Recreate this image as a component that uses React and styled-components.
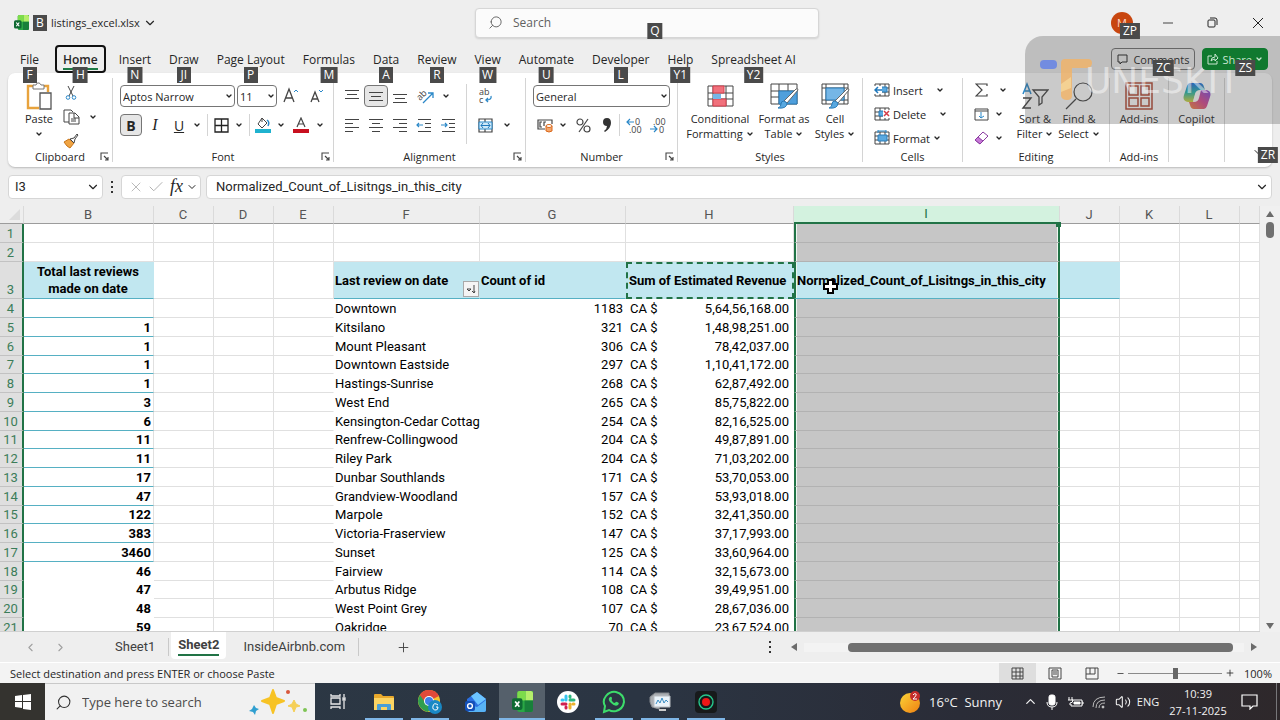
import styled, { createGlobalStyle, css } from "styled-components";
import {
  ChevronDown,
  ChevronLeft,
  ChevronRight,
  ChevronUp,
  Minus,
  Plus,
  Search as SearchIcon,
  X,
  Check,
  Volume2,
} from "lucide-react";

const GlobalStyle = createGlobalStyle`
  * { box-sizing: border-box; }
  body {
    margin: 0;
    background: #eeeeee;
    color: #262626;
    font-family: "Open Sans", "Noto Sans", sans-serif;
    font-size: 12px;
    overflow: hidden;
  }
  button, input, select { font: inherit; color: inherit; }
  button { background: none; border: none; padding: 0; }
`;

const Window = styled.div`
  position: relative;
  display: flex;
  flex-direction: column;
  height: 100vh;
`;

/* ---------- title bar ---------- */

const TitleBar = styled.header`
  display: grid;
  grid-template-columns: 1fr 344px 1fr;
  align-items: center;
  height: 45px;
  padding-left: 14px;
  flex: none;
`;

const FileArea = styled.div`
  display: flex;
  align-items: center;
  gap: 4px;
`;

const FileName = styled.button`
  display: flex;
  align-items: center;
  gap: 3px;
  font-size: 11px;
`;

const Tip = styled.kbd`
  display: inline-block;
  height: 16px;
  min-width: 14px;
  padding: 0 3px;
  background: #4a4a4a;
  color: #ffffff;
  font-family: "Open Sans", sans-serif;
  font-size: 12px;
  font-weight: 400;
  line-height: 16px;
  text-align: center;
`;

const FloatTip = styled(Tip)`
  position: absolute;
  z-index: 6;
  top: ${({ $top }) => $top}px;
  left: ${({ $left }) => $left || "50%"};
  transform: translateX(-50%);
`;

const Magnifier = styled(SearchIcon)`
  transform: scaleX(-1);
`;

const SearchBox = styled.label`
  position: relative;
  display: flex;
  align-items: center;
  gap: 10px;
  height: 30px;
  padding: 0 12px;
  background: #fbfbfb;
  border: 1px solid #d6d6d6;
  border-radius: 4px;
  box-shadow: 0 1px 2px #0000001f;
  color: #616161;

  input {
    flex: 1;
    min-width: 0;
    padding: 0;
    border: none;
    outline: none;
    background: none;
  }
  input::placeholder { color: #616161; opacity: 1; }
`;

const WindowButtons = styled.div`
  display: flex;
  justify-content: flex-end;
  align-items: center;
`;

const WindowButton = styled.button`
  display: grid;
  place-items: center;
  width: 45px;
  height: 32px;
`;

const Avatar = styled.button`
  position: relative;
  width: 22px;
  height: 22px;
  margin-right: 12px;
  border-radius: 50%;
  background: #c8460f;
  color: #ffd9c7;
  font-size: 11px;
`;

/* ---------- ribbon tabs ---------- */

const TabRow = styled.nav`
  display: flex;
  align-items: center;
  height: 28px;
  padding: 0 12px 0 11px;
  flex: none;
`;

const Tab = styled.button`
  position: relative;
  height: 28px;
  margin: 0 2px;
  padding: 0 7px;
  border-radius: 4px;
  white-space: nowrap;

  ${({ $active }) =>
    $active &&
    css`
      margin: 0 4px 0 7px;
      padding: 0 6px;
      border: 2px solid #111111;
      font-weight: 600;

      &::after {
        content: "";
        position: absolute;
        left: 6px;
        right: 6px;
        bottom: 1px;
        height: 2px;
        background: #1d7a45;
      }
    `}
`;

const Spacer = styled.div`
  flex: 1;
`;

const ActionButton = styled.button`
  position: relative;
  z-index: ${({ $primary }) => ($primary ? 5 : "auto")};
  display: flex;
  align-items: center;
  gap: ${({ $primary }) => ($primary ? 3 : 5)}px;
  height: 22px;
  padding: 0 ${({ $primary }) => ($primary ? 4 : 5)}px;
  margin-left: 7px;
  border: 1px solid ${({ $primary }) => ($primary ? "#10792f" : "#707070")};
  border-radius: 4px;
  background: ${({ $primary }) => ($primary ? "#10792f" : "transparent")};
  color: ${({ $primary }) => ($primary ? "#c9e6d1" : "#1c1c1c")};
  font-size: 11px;
`;

/* ---------- ribbon ---------- */

const Ribbon = styled.section`
  position: relative;
  display: flex;
  height: 94px;
  margin: 0 8px;
  padding: 5px 0;
  background: #ffffff;
  border-radius: 7px;
  box-shadow: 0 1px 2px #00000038;
  flex: none;
`;

const Group = styled.div`
  position: relative;
  display: flex;
  flex-direction: column;
  width: ${({ $w }) => $w}px;
  border-right: 1px solid #d4d4d4;
`;

const GroupBody = styled.div`
  display: flex;
  flex: 1;
  min-height: 0;
  padding: ${({ $pad }) => $pad || "0"};
`;

const GroupLabel = styled.div`
  display: flex;
  justify-content: center;
  height: 16px;
  font-size: 11px;
  line-height: 21px;
  flex: none;
`;

const Launcher = styled.button`
  position: absolute;
  right: 3px;
  bottom: 0;
  width: 10px;
  height: 12px;
  display: grid;
  place-items: center;
`;

const Rows = styled.div`
  display: flex;
  flex-direction: column;
  gap: ${({ $gap }) => $gap || 0}px;
`;

const Row = styled.div`
  display: flex;
  align-items: center;
  height: 24px;
  flex: none;
`;

const Tool = styled.button`
  display: flex;
  align-items: center;
  justify-content: center;
  width: ${({ $w }) => $w || 24}px;
  height: 22px;
  border-radius: 4px;
  font-size: 14px;
  ${({ $on }) => $on && "background: #e6e6e6; border: 1px solid #757575;"}

  i { font-family: "Liberation Serif", serif; font-size: 16px; }
`;

const MiniChevron = styled.button`
  display: grid;
  place-items: center;
  width: ${({ $w }) => $w || 12}px;
  height: 20px;
`;

const Rule = styled.span`
  width: 1px;
  height: ${({ $h }) => $h || 22}px;
  margin: 0 ${({ $m }) => $m || 0}px;
  background: #d4d4d4;
`;

const SelectWrap = styled.label`
  position: relative;
  width: ${({ $w }) => $w}px;
  height: 22px;
  margin-right: 2px;

  select {
    width: 100%;
    height: 100%;
    padding: 0 2px;
    appearance: none;
    border: 1px solid #757575;
    border-radius: 4px;
    background: #ffffff;
    font-size: 11px;
  }
  svg {
    position: absolute;
    right: 2px;
    top: 7px;
    pointer-events: none;
  }
`;

const BigButton = styled.button`
  display: flex;
  flex-direction: column;
  align-items: center;
  width: ${({ $w }) => $w}px;
  font-size: 11px;
  line-height: 15px;
  white-space: nowrap;

  span { display: flex; align-items: center; gap: 3px; }
`;

const BigIcon = styled.div`
  display: grid;
  place-items: center;
  height: 30px;
  flex: none;
`;

const BigChevron = styled.div`
  display: grid;
  place-items: center;
  height: 15px;
`;

const TextTool = styled.button`
  display: flex;
  align-items: center;
  gap: 3px;
  height: 24px;
  font-size: 11px;
  flex: none;
`;

const Collapse = styled.button`
  position: absolute;
  right: 8px;
  bottom: 5px;
`;

/* ---------- recorder mark over the corner ---------- */

const Mark = styled.div`
  position: absolute;
  z-index: 4;
  top: 36px;
  right: 0;
  display: flex;
  width: 255px;
  height: 88px;
  padding: 22px 0 0 14px;
  border-top-left-radius: 18px;
  background: #5050504d;
  pointer-events: none;
`;

const MarkText = styled.span`
  margin: 5px 0 0 4px;
  color: #ffffff78;
  font-family: "DejaVu Sans", sans-serif;
  font-size: 36px;
  line-height: 36px;
`;

const MarkLogo = styled.svg`
  width: 42px;
  height: 46px;
  overflow: visible;
`;

/* ---------- formula bar ---------- */

const FormulaBar = styled.section`
  display: flex;
  align-items: center;
  gap: 5px;
  height: 39px;
  padding: 0 8px;
  flex: none;
`;

const Field = styled.div`
  display: flex;
  align-items: center;
  justify-content: space-between;
  width: ${({ $w }) => ($w ? `${$w}px` : "auto")};
  flex: ${({ $w }) => ($w ? "none" : 1)};
  height: 24px;
  padding: 0 2px 0 6px;
  border: 1px solid #d6d6d6;
  border-radius: 4px;
  background: #ffffff;

  input {
    flex: 1;
    width: 10px;
    border: none;
    outline: none;
    background: none;
    font-family: Roboto, sans-serif;
    font-size: 13px;
  }
`;

const NameInput = styled.input`
  padding: 0;
`;

const FormulaInput = styled.input`
  padding: 0 0 0 3px;
`;

const Fx = styled.button`
  margin-left: 2px;
  font-family: "Liberation Serif", serif;
  font-style: italic;
  font-size: 18px;
`;

const Dots = styled.button`
  display: grid;
  place-items: center;
  width: 8px;
  height: 20px;
`;

/* ---------- sheet ---------- */

const SheetArea = styled.main`
  display: flex;
  flex: 1;
  min-height: 0;
`;

const SheetClip = styled.div`
  flex: 1;
  min-width: 0;
  overflow: hidden;
  border-bottom: 1px solid #d0d0d0;
`;

const Sheet = styled.table`
  width: 100%;
  table-layout: fixed;
  border-collapse: separate;
  border-spacing: 0;
  background: #ffffff;
  font-family: Roboto, "Open Sans", sans-serif;
  font-size: 13px;
  color: #000000;

  td, th {
    position: relative;
    padding: 0 2px 0 1px;
    line-height: 17px;
    white-space: nowrap;
  }
  thead th { line-height: 16px; }
`;

const SheetRow = styled.tr`
  height: ${({ $h }) => $h}px;
`;

const ColumnHead = styled.th`
  background: ${({ $on }) => ($on ? "#d3f2df" : "#eeeeee")};
  border-right: 1px solid #dadada;
  border-bottom: ${({ $on }) => ($on ? "2px solid #217346" : "1px solid #9c9c9c")};
  color: ${({ $on }) => ($on ? "#217346" : "#555555")};
  font-weight: 400;
`;

const FillHandle = styled.i`
  position: absolute;
  z-index: 2;
  right: -2px;
  bottom: -5px;
  width: 5px;
  height: 5px;
  background: #217346;
`;

const Corner = styled.i`
  display: block;
  width: 0;
  margin: 0 0 0 8px;
  border-left: 11px solid transparent;
  border-bottom: 11px solid #dcdcdc;
`;

const RowHead = styled.th`
  background: #dfdfdf;
  border-right: 2px solid #217346;
  border-bottom: 1px solid #c2c2c2;
  color: #3b7d59;
  font-weight: 400;
  vertical-align: bottom;
`;

const Cell = styled.td`
  border-right: 1px solid #e0e0e0;
  border-bottom: 1px solid #e0e0e0;
  font-weight: ${({ $bold }) => ($bold ? 700 : 400)};
  text-align: ${({ $align }) => $align || "left"};

  ${({ $plain }) => $plain && "border-color: transparent;"}
  ${({ $noRight }) => $noRight && "border-right-color: transparent;"}
  ${({ $picked }) =>
    $picked &&
    css`
      background: #c6c6c6;
      border-left: 2px solid #217346;
      border-right: 2px solid #217346;
      border-bottom-color: #b2b2b2;
      box-shadow: inset 1px 0 #eef6f0, inset -1px 0 #eef6f0;
    `}
  ${({ $head }) => $head && "background: #c1e7f0;"}
  ${({ $head, $picked }) => $head && !$picked && "border-right-color: #c1e7f0;"}
  ${({ $teal }) => $teal && "border-bottom-color: #56b0c3;"}
  ${({ $copied }) => $copied && "border: 2px dashed #217346;"}
`;

const Money = styled.div`
  display: flex;
  justify-content: space-between;
  padding: 0 2px 0 3px;
`;

const FilterButton = styled.button`
  position: absolute;
  right: 0;
  bottom: 1px;
  display: grid;
  place-items: center;
  width: 16px;
  height: 16px;
  background: #f4f4f4;
  border: 1px solid #a9a9a9;
`;

const Pointer = styled.svg`
  position: absolute;
  left: 27px;
  top: 17px;
`;

const VScroll = styled.div`
  display: flex;
  flex-direction: column;
  align-items: center;
  width: 20px;
  padding: 4px 0 2px;
  background: #f0f0f0;
`;

const VThumb = styled.div`
  width: 8px;
  height: 16px;
  margin: 4px 0 auto;
  border-radius: 4px;
  background: #707070;
`;

/* ---------- sheet tabs + status ---------- */

const SheetTabs = styled.nav`
  display: flex;
  align-items: center;
  height: 31px;
  padding: 0 22px 0 15px;
  border-bottom: 1px solid #ffffff;
  flex: none;
`;

const SheetArrows = styled.div`
  display: flex;
  margin-right: 26px;
`;

const Arrow = styled.button`
  display: grid;
  place-items: center;
  width: 30px;
  height: 24px;
  color: #a0a0a0;
`;

const AddSheet = styled(Arrow)`
  margin-left: 29px;
  color: #444444;
`;

const SheetTab = styled.button`
  height: 18px;
  padding: 0 13px 0 14px;
  font-family: Roboto, sans-serif;
  font-size: 13px;
  line-height: 18px;
  color: #404040;
  border-right: 1px solid #c9c9c9;

  ${({ $active }) =>
    $active &&
    css`
      align-self: flex-start;
      height: 27px;
      margin: 0 3px 0 2px;
      padding: 0 7px;
      background: #ffffff;
      border: none;
      border-radius: 0 0 4px 4px;
      font-weight: 700;

      span {
        display: block;
        border-bottom: 2px solid #217346;
      }
    `}
`;

const HScroll = styled.div`
  display: flex;
  align-items: center;
  gap: 6px;
  width: 468px;
  margin-left: 16px;
`;

const HTrack = styled.div`
  flex: 1;
  height: 9px;
  padding: 0 11px 0 44px;
  background: #f3f3f3;
`;

const HThumb = styled.div`
  height: 9px;
  border-radius: 4px;
  background: #707070;
`;

const Status = styled.footer`
  display: flex;
  align-items: center;
  height: 20px;
  padding: 0 8px 0 10px;
  background: #f3f3f3;
  font-size: 11px;
  flex: none;
`;

const ViewButton = styled.button`
  display: grid;
  place-items: center;
  width: 37px;
  height: 20px;
  background: ${({ $on }) => ($on ? "#dedede" : "none")};
`;

const Zoom = styled.div`
  display: flex;
  align-items: center;
  gap: 3px;
  margin-left: 6px;

  input {
    width: 94px;
    height: 14px;
    margin: 0;
    appearance: none;
    background: linear-gradient(#8a8a8a, #8a8a8a) center / 100% 1px no-repeat;
  }
  input::-webkit-slider-thumb {
    appearance: none;
    width: 5px;
    height: 11px;
    background: #666666;
  }
  output { width: 34px; text-align: right; }
`;

/* ---------- taskbar ---------- */

const Taskbar = styled.footer`
  display: flex;
  height: 37px;
  background: linear-gradient(90deg, #2c3944, #2b3543 50%, #2a2c37 75%, #2e282b);
  color: #f2f2f2;
  flex: none;
`;

const Start = styled.button`
  display: grid;
  place-items: center;
  width: 45px;
  background: #34332f;
`;

const TaskSearch = styled.label`
  display: flex;
  align-items: center;
  gap: 10px;
  width: 270px;
  padding: 0 6px 0 10px;
  background: #f1f1f1;
  border-top: 1px solid #c9c9c9;
  color: #333333;

  input {
    flex: 1;
    min-width: 0;
    padding: 0;
    border: none;
    outline: none;
    background: none;
    font-size: 13px;
  }
  input::placeholder { color: #4b4b4b; opacity: 1; }
`;

const TaskButton = styled.button`
  position: relative;
  display: grid;
  place-items: center;
  width: 46px;
  background: ${({ $on }) => ($on ? "#55606b" : "none")};

  &::after {
    content: "";
    position: absolute;
    bottom: 0;
    left: ${({ $on }) => ($on ? 0 : 4)}px;
    right: ${({ $on }) => ($on ? 0 : 4)}px;
    height: 2px;
    background: ${({ $open }) => ($open ? "#7fb6e6" : "none")};
  }
`;

const Weather = styled.button`
  display: flex;
  align-items: center;
  gap: 8px;
  margin-right: 17px;
  font-size: 13px;
  white-space: pre;
`;

const Tray = styled.button`
  display: grid;
  place-items: center;
  width: ${({ $w }) => $w || 23}px;
  font-size: 11px;
`;

const Clock = styled.time`
  display: flex;
  flex-direction: column;
  align-items: center;
  justify-content: center;
  width: 76px;
  font-size: 11px;
  line-height: 17px;
`;

const Bell = styled(Tray)`
  padding-right: 14px;
  border-right: 1px solid #77777a;
  margin-right: 3px;
`;

/* ---------- drawings ---------- */

const Svg = ({ w = 16, h = w, box, children, ...rest }) => (
  <svg width={w} height={h} viewBox={box || `0 0 ${w} ${h}`} fill="none" stroke="#444" aria-hidden="true" {...rest}>
    {children}
  </svg>
);

const Chev = ({ size = 8 }) => <ChevronDown size={size} strokeWidth={size > 9 ? 2 : 4} aria-hidden="true" />;

const Glyph = styled.text`
  fill: #444444;
  stroke: none;
  font-family: "Open Sans", sans-serif;
  font-size: 9px;
`;

const ExcelIcon = ({ size = 16 }) => (
  <Svg w={size} box="0 0 20 20" stroke="none">
    <path d="M5 2q0-2 2-2h13v18q0 2-2 2H7q-2 0-2-2z" fill="#2aa745" />
    <path d="M5 2q0-2 2-2h6v9H5z" fill="#7ddc4b" />
    <path d="M13 0h5q2 0 2 2v7h-7z" fill="#b5ee6b" />
    <path d="M12 9h8v9q0 2-2 2h-6z" fill="#18803a" />
    <rect y="7" width="10" height="11" rx="2" fill="#0f6a33" />
    <path d="m3 10 4 5m0-5-4 5" stroke="#fff" strokeWidth="1.6" />
  </Svg>
);

const PasteIcon = () => (
  <Svg w={28} h={29}>
    <path d="M9 4H3v22h11M19 4h4v6" stroke="#e8a33d" strokeWidth="2.4" />
    <path d="M8 7V3h3q1-3 3-2 1 0 2 2h3v4z" fill="#fff" stroke="#777" />
    <path d="M15 11h11v16H15z" fill="#fff" stroke="#555" strokeWidth="1.3" />
  </Svg>
);

const CutIcon = () => (
  <Svg w={14}>
    <path d="M4 0 9 10M10 0 5 10" />
    <circle cx="4" cy="11.500" r="1.800" stroke="#2b88c8" />
    <circle cx="10" cy="11.500" r="1.800" stroke="#2b88c8" />
  </Svg>
);

const CopyIcon = () => (
  <Svg w={17}>
    <path d="M6 13H1V1h7l2 2M6 4h6l4 4v7H6zM11 4v5h5M8 10h5M8 12h5" />
  </Svg>
);

const BrushIcon = () => (
  <Svg w={16}>
    <path d="m1 9 5-3 5 4-4 5q-3-1-6-6z" fill="#f0a443" stroke="#c7751b" />
    <path d="m7 6 4-1 3-4 1 1-3 4-1 4z" fill="#fff" />
  </Svg>
);

const GrowIcon = ({ small }) => (
  <Svg w={18}>
    <path d={small ? "M2 15 6 5l4 10M3 12h6" : "M1 15 6 2l5 13M3 11h6"} strokeWidth="1.3" />
    <path d={small ? "m10 3 2 2 2-2" : "m11 5 2-2 2 2"} stroke="#2b88c8" />
  </Svg>
);

const BordersIcon = () => (
  <Svg w={15} stroke="#222">
    <path d="M1 1h13v13H1zM7.500 1v13M1 7.500h13" strokeWidth="1.3" />
  </Svg>
);

const FillIcon = () => (
  <Svg w={16}>
    <path d="m7 1 5 5-5 5-4-4zM7 1v4" />
    <path d="M12 3q3 2 1 6" stroke="#2b88c8" strokeWidth="1.500" />
    <path d="M0 14h16" stroke="#1fb2cf" strokeWidth="4" />
  </Svg>
);

const FontColorIcon = () => (
  <Svg w={16}>
    <path d="m4 10 4-9 4 9M5 7h6" strokeWidth="1.2" />
    <path d="M0 14h16" stroke="#c8101f" strokeWidth="4" />
  </Svg>
);

const LINES = {
  top: "M1 2.500h14M3 6.500h10M1 10.500h14",
  middle: "M1 4.500h14M3 8.500h10M1 12.500h14",
  bottom: "M1 6.500h14M3 10.500h10M1 14.500h14",
  left: "M1 2.500h14M1 6.500h8M1 10.500h14M1 14.500h8",
  center: "M1 2.500h14M4 6.500h8M1 10.500h14M4 14.500h8",
  right: "M1 2.500h14M7 6.500h8M1 10.500h14M7 14.500h8",
};

const LinesIcon = ({ kind }) => (
  <Svg w={16}>
    <path d={LINES[kind]} strokeWidth="1.2" />
  </Svg>
);

const IndentIcon = ({ out }) => (
  <Svg w={16}>
    <path d="M2 2.500h13M9 6.500h6M9 10.500h6M2 14.500h13" strokeWidth="1.2" />
    <path d={out ? "M7 8H1m2-2L1 8l2 2" : "M1 8h6M5 6l2 2-2 2"} stroke="#2b88c8" strokeWidth="1.2" />
  </Svg>
);

const OrientIcon = () => (
  <Svg w={18}>
    <Glyph x="0" y="11" transform="rotate(-45 5 9)">ab</Glyph>
    <path d="m6 16 10-10m-5 0h5v5" stroke="#2b88c8" strokeWidth="1.3" />
  </Svg>
);

const WrapIcon = () => (
  <Svg w={15} h={18}>
    <Glyph x="1" y="8">ab</Glyph>
    <Glyph x="1" y="16">c</Glyph>
    <path d="M13 9q1 4-5 4m2-2-2 2 2 2" stroke="#2b88c8" strokeWidth="1.3" />
  </Svg>
);

const MergeIcon = () => (
  <Svg w={15}>
    <path d="M1 1h13v13H1zM7 1v3M7 11v3" strokeWidth="1.2" />
    <path d="M1 4h13v7H1z" fill="#cfe9f8" stroke="#2b88c8" />
    <path d="M3 7.500h9M5 5 3 7.500l2 2.500m5-5 2 2.500-2 2.500" stroke="#1f78bc" />
  </Svg>
);

const CurrencyIcon = () => (
  <Svg w={17}>
    <path d="M8 12H1V3h14v4M5 5H3v5h2M9 5H7v4" strokeWidth="1.2" />
    <path d="M9 9v5q3 2 6 0V9" fill="#f5a66b" stroke="#d9671a" />
    <ellipse cx="12" cy="9" rx="3" ry="1.500" fill="#fff" stroke="#d9671a" />
  </Svg>
);

const DecimalIcon = ({ more }) => (
  <Svg w={18} h={17}>
    <Glyph x={more ? 10 : 4} y="8">{more ? "0" : ".00"}</Glyph>
    <Glyph x={more ? 4 : 10} y="16">{more ? ".00" : "0"}</Glyph>
    <path d={more ? "M9 5H2m3-3L2 5l3 3" : "M1 12h7M5 9l3 3-3 3"} stroke="#2b88c8" strokeWidth="1.2" />
  </Svg>
);

const CondIcon = () => (
  <Svg w={27} h={23}>
    <path d="M1 1h25v20H1zM1 8h25M1 14h25M6 1v20M19 1v20" />
    <path d="M6 1h11v7H6zM6 14h13v7H6z" fill="#f0717c" stroke="#d8404f" />
    <path d="M6 9h8v5H6z" fill="#75b6e6" stroke="none" />
  </Svg>
);

const TableStyleIcon = ({ cell }) => (
  <Svg w={29} h={27}>
    <path d={cell ? "M1 1h26v20H1zM1 5h26M5 1v20M23 1v20M1 17h26" : "M1 1h26v20H1zM1 8h26M1 14h26M9 1v20M18 1v20"} />
    {cell ? (
      <path d="M5 5h18v12H5z" fill="#75b6e6" stroke="#2b7cb8" />
    ) : (
      <path d="M9 8h18v13H9z" fill="#4f9fdc" stroke="#2b7cb8" />
    )}
    <path d="M28 7 17 20l-3-2L26 6q2-1 2 1z" fill="#fff" stroke="#666" />
    <path d="M17 20q0 6-9 5 3-1 3-4t3-3z" fill="#58a8e0" stroke="#2b7cb8" />
  </Svg>
);

const CellsIcon = ({ kind }) => (
  <Svg w={16}>
    <path d="M1 2h14v12H1zM1 6h14M1 10h14M6 2v12M11 2v12" />
    <path d={kind === "format" ? "M4 5h9v6H4z" : "M5 5h8v5H5z"} fill="#5aa9e0" stroke="#2b7cb8" />
    {kind === "insert" && (
      <>
        <path d="M0 4h8v8H0z" fill="#fff" stroke="none" />
        <path d="M8 8H1m3-3L1 8l3 3" stroke="#1f78bc" strokeWidth="1.500" />
      </>
    )}
    {kind === "delete" && (
      <>
        <path d="M9 4h7v8H9z" fill="#fff" stroke="none" />
        <path d="m10 5 5 5m0-5-5 5" stroke="#d33c48" strokeWidth="1.500" />
      </>
    )}
    {kind === "format" && <path d="M4 0v3M12 0v3M4 1h8" stroke="#2b88c8" />}
  </Svg>
);

const SortIcon = () => (
  <Svg w={28}>
    <path d="m2 12 4-10 4 10M3 9h6" stroke="#2b88c8" strokeWidth="1.500" />
    <path d="M2 16h8L2 26h8" strokeWidth="1.400" />
    <path d="M12 8h15l-6 7v6l-3 2v-8z" strokeWidth="1.300" />
  </Svg>
);

const FindIcon = () => (
  <Svg w={28}>
    <circle cx="18" cy="10" r="9" strokeWidth="1.200" />
    <path d="M11 17 1 27" strokeWidth="1.200" />
  </Svg>
);

const AddinsIcon = () => (
  <Svg w={28} stroke="#b64a35">
    <path d="M1 1h26v26H1z" strokeWidth="1.500" />
    <path d="M4 4h9v9H4zM16 4h8v9h-8zM4 16h9v8H4zM16 16h8v8h-8z" strokeWidth="1.500" />
  </Svg>
);

const CopilotIcon = () => (
  <Svg w={28} stroke="none">
    <defs>
      <linearGradient id="cpA" x1="0" y1="0" x2="0" y2="1">
        <stop offset="0" stopColor="#1d6fe0" />
        <stop offset=".5" stopColor="#2bb8a8" />
        <stop offset="1" stopColor="#d7d43b" />
      </linearGradient>
      <linearGradient id="cpB" x1="1" y1="0" x2="0" y2="1">
        <stop offset="0" stopColor="#7a4be0" />
        <stop offset=".5" stopColor="#d8488f" />
        <stop offset="1" stopColor="#f58a3a" />
      </linearGradient>
    </defs>
    <path d="M7 1h10q3 0 4 4l1 3h-5q-4 0-5 4l-2 8H5q-6-1-4-7L4 4q1-3 3-3z" fill="url(#cpA)" />
    <path d="M21 27H11q-3 0-4-4l-1-3h5q4 0 5-4l2-8h5q6 1 4 7l-3 9q-1 3-3 3z" fill="url(#cpB)" />
    <path d="M13 10h4l-3 9h-4z" fill="#fff" opacity=".8" />
  </Svg>
);

const LaunchIcon = () => (
  <Svg w={9}>
    <path d="M1 8V1h7M4 4l4 4M8 5v3H5" strokeWidth="1.1" />
  </Svg>
);

const DotsIcon = () => (
  <Svg w={4} h={12} stroke="none">
    <path d="M1 0h2v2H1zM1 5h2v2H1zM1 10h2v2H1z" fill="#333" />
  </Svg>
);

const Triangle = ({ d }) => (
  <Svg w={8} stroke="none">
    <path d={d} fill="#6b6b6b" />
  </Svg>
);

/* ---------- data ---------- */

const tabs = [
  ["File", "F"],
  ["Home", "H"],
  ["Insert", "N"],
  ["Draw", "JI"],
  ["Page Layout", "P"],
  ["Formulas", "M"],
  ["Data", "A"],
  ["Review", "R"],
  ["View", "W"],
  ["Automate", "U"],
  ["Developer", "L"],
  ["Help", "Y1"],
  ["Spreadsheet AI", "Y2"],
];

const columns = [
  ["B", 130],
  ["C", 60],
  ["D", 60],
  ["E", 60],
  ["F", 146],
  ["G", 146],
  ["H", 168],
  ["I", 266],
  ["J", 60],
  ["K", 60],
  ["L", 60],
];

const rows = [
  ["", "Downtown", 1183, "5,64,56,168.00"],
  [1, "Kitsilano", 321, "1,48,98,251.00"],
  [1, "Mount Pleasant", 306, "78,42,037.00"],
  [1, "Downtown Eastside", 297, "1,10,41,172.00"],
  [1, "Hastings-Sunrise", 268, "62,87,492.00"],
  [3, "West End", 265, "85,75,822.00"],
  [6, "Kensington-Cedar Cottag", 254, "82,16,525.00"],
  [11, "Renfrew-Collingwood", 204, "49,87,891.00"],
  [11, "Riley Park", 204, "71,03,202.00"],
  [17, "Dunbar Southlands", 171, "53,70,053.00"],
  [47, "Grandview-Woodland", 157, "53,93,018.00"],
  [122, "Marpole", 152, "32,41,350.00"],
  [383, "Victoria-Fraserview", 147, "37,17,993.00"],
  [3460, "Sunset", 125, "33,60,964.00"],
  [46, "Fairview", 114, "32,15,673.00"],
  [47, "Arbutus Ridge", 108, "39,49,951.00"],
  [48, "West Point Grey", 107, "28,67,036.00"],
  [59, "Oakridge", 70, "23,67,524.00"],
];

const blanks = (keys, noRightOn) => keys.map((k) => <Cell key={k} $noRight={k === noRightOn} />);

function EmptyRow({ n }) {
  return (
    <SheetRow $h={19}>
      <RowHead scope="row">{n}</RowHead>
      {columns.map(([c]) => (
        <Cell key={c} $picked={c === "I"} />
      ))}
      <Cell />
    </SheetRow>
  );
}

function Grid() {
  return (
    <Sheet>
      <colgroup>
        <col width="24" />
        {columns.map(([c, w]) => (
          <col key={c} width={w} />
        ))}
        <col />
      </colgroup>
      <thead>
        <SheetRow $h={18}>
          <ColumnHead>
            <Corner />
          </ColumnHead>
          {columns.map(([c]) => (
            <ColumnHead key={c} scope="col" $on={c === "I"}>
              {c}
              {c === "I" && <FillHandle />}
            </ColumnHead>
          ))}
          <ColumnHead />
        </SheetRow>
      </thead>
      <tbody>
        <EmptyRow n={1} />
        <EmptyRow n={2} />
        <SheetRow $h={37}>
          <RowHead scope="row">3</RowHead>
          <Cell $head $teal $bold $align="center">
            Total last reviews
            <br />
            made on date
          </Cell>
          {blanks(["C", "D", "E"])}
          <Cell $head $teal $bold>
            Last review on date
            <FilterButton aria-label="Sort and filter">
              <Svg w={10}>
                <path d="M1 5h4L3 7zM8 1v8M6 7l2 2 1-2" />
              </Svg>
            </FilterButton>
          </Cell>
          <Cell $head $teal $bold>Count of id</Cell>
          <Cell $head $bold $copied>Sum of Estimated Revenue</Cell>
          <Cell $head $teal $bold $picked>
            Normalized_Count_of_Lisitngs_in_this_city
            <Pointer width="15" height="15" viewBox="0 0 15 15" aria-hidden="true">
              <path d="M5 1h5v4h4v5h-4v4H5v-4H1V5h4z" fill="#fff" stroke="#000" strokeWidth="2" />
            </Pointer>
          </Cell>
          <Cell $head $teal />
          {blanks(["K", "L", "M"])}
        </SheetRow>
        {rows.map(([reviews, area, count, revenue], i) => (
          <SheetRow key={area} $h={i % 4 === 3 ? 18 : 19}>
            <RowHead scope="row">{i + 4}</RowHead>
            <Cell $bold $align="right" $teal={i < 14} $plain={i >= 14}>
              {reviews}
            </Cell>
            {blanks(["C", "D", "E"], "E")}
            <Cell $plain>{area}</Cell>
            <Cell $plain $align="right">{count}</Cell>
            <Cell $plain>
              <Money>
                <span>CA $</span>
                <span>{revenue}</span>
              </Money>
            </Cell>
            <Cell $picked />
            {blanks(["J", "K", "L", "M"])}
          </SheetRow>
        ))}
      </tbody>
    </Sheet>
  );
}

function RibbonGroup({ label, width, pad, launch, children }) {
  return (
    <Group $w={width}>
      <GroupBody $pad={pad}>{children}</GroupBody>
      <GroupLabel>{label}</GroupLabel>
      {launch && (
        <Launcher aria-label={`${label} settings`}>
          <LaunchIcon />
        </Launcher>
      )}
    </Group>
  );
}

function Big({ width, icon, lines, menu }) {
  return (
    <BigButton $w={width}>
      <BigIcon>{icon}</BigIcon>
      {lines.map((line, i) => (
        <span key={line}>
          {line}
          {menu && i === lines.length - 1 && <Chev />}
        </span>
      ))}
    </BigButton>
  );
}

function RibbonBar() {
  return (
    <Ribbon>
      <RibbonGroup label="Clipboard" width={105} pad="3px 0 0 14px" launch>
        <BigButton $w={34}>
          <BigIcon><PasteIcon /></BigIcon>
          <span>Paste</span>
          <BigChevron><Chev /></BigChevron>
        </BigButton>
        <Rows>
          <Row><Tool $w={30} aria-label="Cut"><CutIcon /></Tool></Row>
          <Row>
            <Tool $w={30} aria-label="Copy"><CopyIcon /></Tool>
            <MiniChevron $w={14}><Chev /></MiniChevron>
          </Row>
          <Row><Tool $w={30} aria-label="Format Painter"><BrushIcon /></Tool></Row>
        </Rows>
      </RibbonGroup>

      <RibbonGroup label="Font" width={221} pad="6px 0 0 7px" launch>
        <Rows $gap={5}>
          <Row>
            <SelectWrap $w={115}>
              <select aria-label="Font"><option>Aptos Narrow</option></select>
              <Chev />
            </SelectWrap>
            <SelectWrap $w={40}>
              <select aria-label="Font size"><option>11</option></select>
              <Chev />
            </SelectWrap>
            <Tool $w={26} aria-label="Grow font"><GrowIcon /></Tool>
            <Tool $w={26} aria-label="Shrink font"><GrowIcon small /></Tool>
          </Row>
          <Row>
            <Tool $w={22} $on><b>B</b></Tool>
            <Tool $w={26}><i>I</i></Tool>
            <Tool $w={22}><u>U</u></Tool>
            <MiniChevron $w={14}><Chev /></MiniChevron>
            <Rule $m={3} />
            <Tool $w={20} aria-label="Borders"><BordersIcon /></Tool>
            <MiniChevron $w={16}><Chev /></MiniChevron>
            <Rule $m={2} />
            <Tool $w={22} aria-label="Fill color"><FillIcon /></Tool>
            <MiniChevron $w={14}><Chev /></MiniChevron>
            <Tool $w={26} aria-label="Font color"><FontColorIcon /></Tool>
            <MiniChevron><Chev /></MiniChevron>
          </Row>
        </Rows>
      </RibbonGroup>

      <RibbonGroup label="Alignment" width={192} pad="6px 0 0 6px" launch>
        <Rows $gap={5}>
          <Row>
            <Tool aria-label="Top align"><LinesIcon kind="top" /></Tool>
            <Tool $on aria-label="Middle align"><LinesIcon kind="middle" /></Tool>
            <Tool aria-label="Bottom align"><LinesIcon kind="bottom" /></Tool>
            <Tool $w={28} aria-label="Orientation"><OrientIcon /></Tool>
            <MiniChevron><Chev /></MiniChevron>
          </Row>
          <Row>
            <Tool aria-label="Align left"><LinesIcon kind="left" /></Tool>
            <Tool aria-label="Center"><LinesIcon kind="center" /></Tool>
            <Tool aria-label="Align right"><LinesIcon kind="right" /></Tool>
            <Tool aria-label="Decrease indent"><IndentIcon out /></Tool>
            <Tool aria-label="Increase indent"><IndentIcon /></Tool>
          </Row>
        </Rows>
        <Rule $h={60} $m={6} />
        <Rows $gap={5}>
          <Row><Tool aria-label="Wrap text"><WrapIcon /></Tool></Row>
          <Row>
            <Tool aria-label="Merge"><MergeIcon /></Tool>
            <MiniChevron $w={20}><Chev /></MiniChevron>
          </Row>
        </Rows>
      </RibbonGroup>

      <RibbonGroup label="Number" width={152} pad="6px 0 0 7px" launch>
        <Rows $gap={5}>
          <Row>
            <SelectWrap $w={137}>
              <select aria-label="Number format"><option>General</option></select>
              <Chev />
            </SelectWrap>
          </Row>
          <Row>
            <Tool aria-label="Accounting format"><CurrencyIcon /></Tool>
            <MiniChevron><Chev /></MiniChevron>
            <Tool $w={28} aria-label="Percent style">
              <Svg w={15}>
                <circle cx="4" cy="4" r="3" strokeWidth="1.200" />
                <circle cx="11" cy="11" r="3" strokeWidth="1.200" />
                <path d="M12 1 3 14" strokeWidth="1.200" />
              </Svg>
            </Tool>
            <Tool $w={20} aria-label="Comma style">
              <Svg w={8} h={14} stroke="none">
                <path d="M4 0q4 0 4 5t-6 9l-1-1q3-2 3-5-4 0-4-4t4-4z" fill="#333" />
              </Svg>
            </Tool>
            <Rule $m={2} />
            <Tool aria-label="Increase decimal"><DecimalIcon more /></Tool>
            <Tool aria-label="Decrease decimal"><DecimalIcon /></Tool>
          </Row>
        </Rows>
      </RibbonGroup>

      <RibbonGroup label="Styles" width={185} pad="3px 0 0 7px">
        <Big width={70} icon={<CondIcon />} lines={["Conditional", "Formatting"]} menu />
        <Big width={58} icon={<TableStyleIcon />} lines={["Format as", "Table"]} menu />
        <Big width={44} icon={<TableStyleIcon cell />} lines={["Cell", "Styles"]} menu />
      </RibbonGroup>

      <RibbonGroup label="Cells" width={100} pad="0 0 0 11px">
        <Rows>
          <TextTool><CellsIcon kind="insert" />Insert<MiniChevron as="span" $w={28}><Chev /></MiniChevron></TextTool>
          <TextTool><CellsIcon kind="delete" />Delete<MiniChevron as="span" $w={28}><Chev /></MiniChevron></TextTool>
          <TextTool><CellsIcon kind="format" />Format<Chev /></TextTool>
        </Rows>
      </RibbonGroup>

      <RibbonGroup label="Editing" width={147} pad="0 0 0 6px">
        <Rows>
          <Row>
            <Tool aria-label="AutoSum">
              <Svg w={13} h={14}><path d="M12 3V1H1l6 6-6 6h11v-2" strokeWidth="1.200" /></Svg>
            </Tool>
            <MiniChevron $w={20}><Chev /></MiniChevron>
          </Row>
          <Row>
            <Tool aria-label="Fill">
              <Svg w={15} h={13}>
                <path d="M1 1h13v11H1zM1 3h13" />
                <path d="M7 4v6M5 8l2 2 3-2" stroke="#2b88c8" />
              </Svg>
            </Tool>
            <MiniChevron><Chev /></MiniChevron>
          </Row>
          <Row>
            <Tool aria-label="Clear">
              <Svg w={15} h={14} stroke="#8a3ba0">
                <path d="m9 1 5 4-8 8-5-4z" />
                <path d="m4 6 5 4-3 3-5-4z" fill="#c879d8" />
              </Svg>
            </Tool>
            <MiniChevron><Chev /></MiniChevron>
          </Row>
        </Rows>
        <GroupBody $pad="3px 0 0 0">
          <Big width={44} icon={<SortIcon />} lines={["Sort &", "Filter"]} menu />
          <Big width={44} icon={<FindIcon />} lines={["Find &", "Select"]} menu />
        </GroupBody>
      </RibbonGroup>

      <RibbonGroup label="Add-ins" width={59} pad="3px 0 0 0">
        <Big width={58} icon={<AddinsIcon />} lines={["Add-ins"]} />
      </RibbonGroup>
      <RibbonGroup width={56} pad="3px 0 0 0">
        <Big width={55} icon={<CopilotIcon />} lines={["Copilot"]} />
      </RibbonGroup>
      <Collapse aria-label="Collapse ribbon">
        <ChevronDown size={12} />
        <FloatTip $top={2} $left="16px">ZR</FloatTip>
      </Collapse>
    </Ribbon>
  );
}

function TaskIcons() {
  return (
    <>
      <TaskButton aria-label="Task view">
        <Svg w={17} stroke="#e8e8e8">
          <path d="M1 1v2h9V1M1 16v-2h9v2M1 5h9v6H1zM14 1v3M14 8v8M13 5h2v2h-2z" strokeWidth="1.300" />
        </Svg>
      </TaskButton>
      <TaskButton $open aria-label="File Explorer">
        <Svg w={22} h={18} stroke="none">
          <path d="M1 2q0-1 1-1h6l2 2h10q1 0 1 1v12H1z" fill="#e9a92c" />
          <path d="M1 5h20v12H1z" fill="#fcd462" />
          <path d="M4 17v-5q0-1 1-1h12q1 0 1 1v5h-4v-3H8v3z" fill="#4a9fd8" />
        </Svg>
      </TaskButton>
      <TaskButton $open aria-label="Chrome">
        <Svg w={24} stroke="none">
          <circle cx="11" cy="11" r="11" fill="#f4c430" />
          <path d="M11 11 2 5Q5 0 11 0t10 6z" fill="#e04a3a" />
          <path d="M11 11 2 5q-4 6 0 12 3 4 8 5l5-8z" fill="#2f9e4f" />
          <path d="M11 6h10Q18 0 11 0 5 0 2 5l4 6z" fill="#e04a3a" />
          <circle cx="11" cy="11" r="5" fill="#fff" />
          <circle cx="11" cy="11" r="4" fill="#3e7fe8" />
          <circle cx="17" cy="17" r="7" fill="#1988c4" />
          <path d="M20 15q-4-3-5 1t3 4q2 0 2-3h-2" stroke="#fff" fill="none" />
        </Svg>
      </TaskButton>
      <TaskButton aria-label="Outlook">
        <Svg w={22} stroke="none">
          <path d="M2 8 12 1l9 7v11q0 2-2 2H4q-2 0-2-2z" fill="#2b6fe0" />
          <path d="M6 5 12 1l9 7-8 6z" fill="#6cc4ff" />
          <path d="m2 13 10 3 9-7v10q0 2-2 2H4z" fill="#58b3f5" />
          <rect y="10" width="10" height="10" rx="2" fill="#1450b8" />
          <circle cx="5" cy="15" r="2.400" stroke="#fff" strokeWidth="1.400" />
        </Svg>
      </TaskButton>
      <TaskButton $on $open aria-label="Excel"><ExcelIcon size={21} /></TaskButton>
      <TaskButton aria-label="Slack">
        <Svg w={22} strokeWidth="3" strokeLinecap="round">
          <circle cx="11" cy="11" r="11" fill="#fff" stroke="none" />
          <path d="M9 5v4M5 9h1" stroke="#36c5f0" />
          <path d="M13 9h4M13 5v1" stroke="#2eb67d" />
          <path d="M13 13v4M16 13h1" stroke="#ecb22e" />
          <path d="M5 13h4M9 16v1" stroke="#d0204f" />
        </Svg>
      </TaskButton>
      <TaskButton $open aria-label="WhatsApp">
        <Svg w={24} stroke="#3ddc6b">
          <path d="m2 22 1-6q-3-5 1-10 4-5 10-4 8 2 8 10-1 7-8 9-4 1-7-1z" strokeWidth="2" />
          <path d="M8 7q2-1 2 2-1 1 0 2 1 2 3 2 1-2 2-1 3 1 1 3-3 2-7-2t-1-6z" fill="#3ddc6b" stroke="none" />
        </Svg>
      </TaskButton>
      <TaskButton $open aria-label="Monitor">
        <Svg w={22} h={20}>
          <path d="M1 5 6 1h14v12h-9l-1 4-7-2-2-5z" fill="#a9adb2" stroke="#85898e" />
          <path d="M5 4h16v11H5z" fill="#eaf3fa" stroke="#b9bdc2" />
          <path d="m7 12 2-4 2 3 2-5 2 5 2-3 2 2" stroke="#3b8ec4" />
          <path d="M10 17h7v2h-7z" fill="#ccc" stroke="none" />
        </Svg>
      </TaskButton>
      <TaskButton $open aria-label="Recorder">
        <Svg w={22}>
          <rect width="22" height="22" rx="4" fill="#171a1b" stroke="none" />
          <circle cx="11" cy="11" r="7" stroke="#25c78d" strokeWidth="1.400" />
          <circle cx="11" cy="11" r="4" fill="#f01616" stroke="none" />
        </Svg>
      </TaskButton>
    </>
  );
}

function App() {
  return (
    <>
      <GlobalStyle />
      <Window>
        <TitleBar>
          <FileArea>
            <ExcelIcon size={15} />
            <Tip>B</Tip>
            <FileName>
              listings_excel.xlsx
              <Chev size={14} />
            </FileName>
          </FileArea>
          <SearchBox>
            <Magnifier size={15} strokeWidth={1.5} />
            <input type="search" placeholder="Search" aria-label="Search" />
            <FloatTip $top={14} $left="179px">Q</FloatTip>
          </SearchBox>
          <WindowButtons>
            <Avatar>
              M
              <FloatTip $top={11} $left="19px">ZP</FloatTip>
            </Avatar>
            <WindowButton aria-label="Minimize"><Svg w={10}><path d="M0 5h10" /></Svg></WindowButton>
            <WindowButton aria-label="Restore">
              <Svg w={11}><path d="M1 4q0-1 1-1h5q1 0 1 1v5q0 1-1 1H2q-1 0-1-1zM3 1h5q2 0 2 2v5" stroke="#222" /></Svg>
            </WindowButton>
            <WindowButton aria-label="Close"><Svg w={10}><path d="m0 0 10 10M10 0 0 10" stroke="#222" /></Svg></WindowButton>
          </WindowButtons>
        </TitleBar>

        <TabRow>
          {tabs.map(([name, key]) => (
            <Tab key={name} $active={name === "Home"}>
              {name}
              <FloatTip $top={name === "Home" ? 20 : 22}>{key}</FloatTip>
            </Tab>
          ))}
          <Spacer />
          <ActionButton>
            <Svg w={11}><path d="M1 1h9v7H5l-2 2V8H1z" stroke="#222" /></Svg>
            Comments
            <FloatTip $top={11} $left="51px">ZC</FloatTip>
          </ActionButton>
          <ActionButton $primary>
            <Svg w={12} stroke="#c9e6d1"><path d="M5 3H1v8h9V8M4 8q0-4 4-4V1l3 4-3 3V6q-2 0-4 2z" /></Svg>
            Share
            <Chev />
            <FloatTip $top={11} $left="42px">ZS</FloatTip>
          </ActionButton>
        </TabRow>

        <RibbonBar />

        <Mark>
          <MarkLogo viewBox="0 0 42 46" aria-hidden="true">
            <rect x="1" y="2" width="17" height="9" rx="4" fill="#5f7fe8cc" />
            <path d="M22 5q0-4 4-4h23q4 0 4 4t-4 5H33v28q0 4-5 4t-6-4z" fill="#f2b365cc" />
            <path d="m22 26 10-7v11l-10 4z" fill="#f6d79acc" />
          </MarkLogo>
          <MarkText>UNESKIT</MarkText>
        </Mark>

        <FormulaBar>
          <Field $w={95}>
            <NameInput defaultValue="I3" aria-label="Name box" />
            <Chev size={14} />
          </Field>
          <Dots aria-label="Resize"><DotsIcon /></Dots>
          <Field $w={80}>
            <X size={16} strokeWidth={1.2} color="#a8a8a8" />
            <Check size={18} strokeWidth={1.2} color="#a8a8a8" />
            <Fx aria-label="Insert function">fx</Fx>
            <Chev size={12} />
          </Field>
          <Field>
            <FormulaInput defaultValue="Normalized_Count_of_Lisitngs_in_this_city" aria-label="Formula" />
            <Chev size={14} />
          </Field>
        </FormulaBar>

        <SheetArea>
          <SheetClip>
            <Grid />
          </SheetClip>
          <VScroll>
            <Triangle d="M4 1 8 7H0z" />
            <VThumb />
            <Triangle d="M4 7 0 1h8z" />
          </VScroll>
        </SheetArea>

        <SheetTabs>
          <SheetArrows>
            <Arrow aria-label="Previous sheet"><ChevronLeft size={13} /></Arrow>
            <Arrow aria-label="Next sheet"><ChevronRight size={13} /></Arrow>
          </SheetArrows>
          <SheetTab>Sheet1</SheetTab>
          <SheetTab $active><span>Sheet2</span></SheetTab>
          <SheetTab>InsideAirbnb.com</SheetTab>
          <AddSheet aria-label="New sheet"><Plus size={15} strokeWidth={1.5} /></AddSheet>
          <Spacer />
          <Dots aria-label="Resize tabs"><DotsIcon /></Dots>
          <HScroll>
            <Triangle d="M7 0v8L1 4z" />
            <HTrack><HThumb /></HTrack>
            <Triangle d="M1 0v8l6-4z" />
          </HScroll>
        </SheetTabs>

        <Status>
          Select destination and press ENTER or choose Paste
          <Spacer />
          <ViewButton $on aria-label="Normal view">
            <Svg w={13}><path d="M1 1h11v11H1zM1 5h11M1 9h11M5 1v11M9 1v11" /></Svg>
          </ViewButton>
          <ViewButton aria-label="Page layout view">
            <Svg w={14} h={13}><path d="M1 1h12v11H1zM4 3h6v7H4zM5 5h4M5 7h4" /></Svg>
          </ViewButton>
          <ViewButton aria-label="Page break view">
            <Svg w={14} h={13}><path d="M1 1h12v11H1zM5 1v6h5V1M1 7h4" /></Svg>
          </ViewButton>
          <Zoom>
            <Minus size={9} />
            <input type="range" defaultValue="50" aria-label="Zoom" />
            <Plus size={10} />
            <output>100%</output>
          </Zoom>
        </Status>

        <Taskbar>
          <Start aria-label="Start">
            <Svg w={16} stroke="none"><path d="M0 2l7-1v6H0zM8 1l8-1v7H8zM0 8h7v6l-7-1zM8 8h8v8l-8-1z" fill="#fff" /></Svg>
          </Start>
          <TaskSearch>
            <Magnifier size={17} strokeWidth={1.5} />
            <input placeholder="Type here to search" aria-label="Type here to search" />
            <Svg w={60} h={26} stroke="none">
              <path d="m24 1 3 8 8 3-8 3-3 9-3-9-8-3 8-3z" fill="#f7c325" stroke="#f7c325" strokeWidth="2" strokeLinejoin="round" />
              <path d="m45 11 2 4 4 2-4 1-2 5-2-5-4-1 4-2z" fill="#f5cf55" stroke="#f5cf55" />
              <path d="m5 16 2 3 3 1-3 2-1 4-2-3-4-1 3-2z" fill="#2f9fd0" />
              <circle cx="39" cy="3" r="2" fill="#d8583c" />
              <circle cx="56" cy="21" r="2" fill="#7fc455" />
            </Svg>
          </TaskSearch>
          <TaskIcons />
          <Spacer />
          <Weather>
            <Svg w={21} h={22} stroke="none">
              <defs>
                <linearGradient id="sun" x1="0" y1="0" x2="1" y2="1">
                  <stop offset="0" stopColor="#fbd437" />
                  <stop offset="1" stopColor="#ee7f12" />
                </linearGradient>
              </defs>
              <circle cx="10" cy="12" r="10" fill="url(#sun)" />
              <circle cx="15" cy="5" r="5" fill="#c42b2b" />
              <path d="M13 4q1-2 3-1 1 1-3 5h4" stroke="#fff" fill="none" />
            </Svg>
            16°C  Sunny
          </Weather>
          <Tray aria-label="Hidden icons"><ChevronUp size={15} /></Tray>
          <Tray $w={20} aria-label="Microphone">
            <Svg w={12} h={16} stroke="#fff"><rect x="3" y="1" width="6" height="10" rx="2" fill="#fff" /><path d="M1 8q0 5 5 5t5-5M6 13v3" /></Svg>
          </Tray>
          <Tray $w={27} aria-label="Battery">
            <Svg w={17} h={12} stroke="#fff"><path d="M5 4h10v6H4V8M15 6h1v2h-1M2 1v3M5 1v3M1 4h5q0 3-3 3v2" /><path d="M7 6h6v2H7z" fill="#fff" /></Svg>
          </Tray>
          <Tray $w={20} aria-label="Wi-Fi">
            <Svg w={14} stroke="#bbb"><path d="M1 12Q1 2 13 2M4 13q0-8 9-8M7 13q0-5 6-5" /><circle cx="11" cy="12" r="1" fill="#fff" /></Svg>
          </Tray>
          <Tray $w={27} aria-label="Volume"><Volume2 size={16} strokeWidth={1.6} /></Tray>
          <Tray $w={24}>ENG</Tray>
          <Clock>
            <span>10:39</span>
            <span>27-11-2025</span>
          </Clock>
          <Bell $w={41} aria-label="Notifications">
            <Svg w={17} h={16} stroke="#fff"><path d="M1 1h15v11h-4l-3 3v-3H1z" strokeWidth="1.200" /></Svg>
          </Bell>
        </Taskbar>
      </Window>
    </>
  );
}

export default App;
